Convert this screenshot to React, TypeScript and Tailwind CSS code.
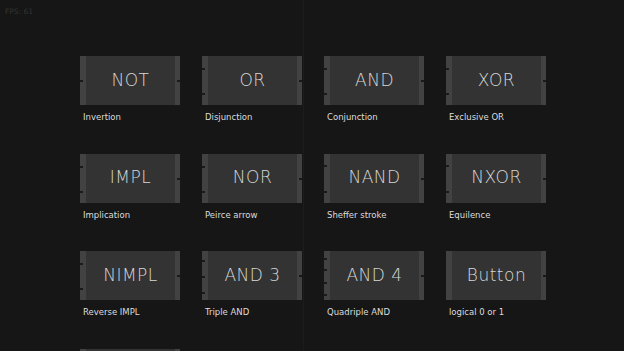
const gates = [
  { name: "NOT", label: "Invertion", inputs: [24] },
  { name: "OR", label: "Disjunction", inputs: [12, 37] },
  { name: "AND", label: "Conjunction", inputs: [12, 37] },
  { name: "XOR", label: "Exclusive OR", inputs: [12, 37] },
  { name: "IMPL", label: "Implication", inputs: [12, 37] },
  { name: "NOR", label: "Peirce arrow", inputs: [12, 37] },
  { name: "NAND", label: "Sheffer stroke", inputs: [11, 37] },
  { name: "NXOR", label: "Equilence", inputs: [11, 37] },
  { name: "NIMPL", label: "Reverse IMPL", inputs: [12, 37] },
  { name: "AND 3", label: "Triple AND", inputs: [9, 25, 41] },
  { name: "AND 4", label: "Quadriple AND", inputs: [7, 18, 31, 43] },
  { name: "Button", label: "logical 0 or 1", inputs: [] as number[] },
  { name: "", label: "", inputs: [] as number[] },
]

function Gate({ name, label, inputs }: { name: string; label: string; inputs: number[] }) {
  return (
    <div className="flex flex-col">
      <div className="relative flex h-[49px] w-[100px] bg-[#3d3d3d]">
        <div className="w-[6px] bg-[#424242]" />
        <div className="flex flex-1 items-center justify-center bg-[#333333] text-[17px] font-extralight tracking-[0.5px] text-[#d8d8d8]">
          {name}
        </div>
        <div className="w-[5px] bg-[#424242]" />
        {inputs.map((y) => (
          <div key={y} className="absolute left-0 h-[2px] w-[3px] bg-[#1a1a1a]" style={{ top: y }} />
        ))}
        <div className="absolute right-0 top-[24px] h-[2px] w-[3px] bg-[#1a1a1a]" />
      </div>
      <div className="mt-[7px] pl-[3px] text-[8.5px] leading-[10px] text-[#dcdcdc]">{label}</div>
    </div>
  )
}

export default function App() {
  return (
    <div
      className="relative h-[351px] w-[624px] overflow-hidden bg-[#161616]"
      style={{ fontFamily: '"DejaVu Sans", "Liberation Sans", sans-serif' }}
    >
      <div className="absolute left-[5px] top-[6px] text-[7.5px] text-[#333333]">FPS: 61</div>
      <div className="absolute bottom-0 left-[303px] top-0 w-px bg-[#1c1c1c]" />
      <div className="grid grid-cols-[repeat(4,100px)] gap-x-[22px] auto-rows-[97.7px] pl-[80px] pt-[56px]">
        {gates.map((g, i) => (
          <Gate key={i} {...g} />
        ))}
      </div>
    </div>
  )
}
